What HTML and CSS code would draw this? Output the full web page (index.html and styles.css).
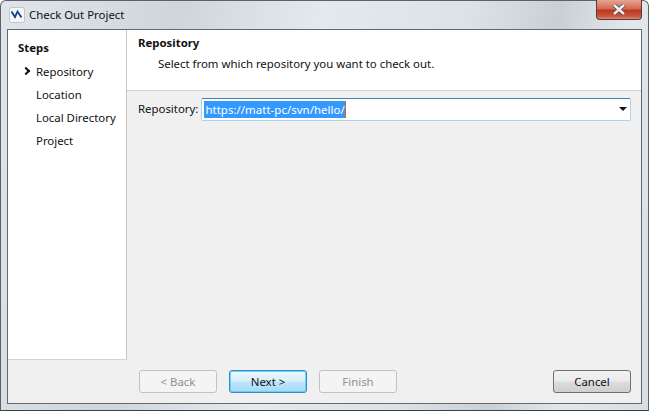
FILE: index.html
```html
<!DOCTYPE html>
<html lang="en">
<head>
  <meta charset="UTF-8" />
  <title>Check Out Project</title>
  <link rel="stylesheet" href="styles.css">
</head>
<body>
  <div class="window">
    <div class="titlebar">
      <svg class="app-icon" width="16" height="16" viewBox="0 0 16 16">
        <rect x="0.5" y="0.5" width="15" height="15" rx="2" fill="#f4f5f6" stroke="#c2c6ca" />
        <path d="M2.5 4.5 L6 10 L8.5 4.5 L12.5 10.5" fill="none" stroke="#123f8c" stroke-width="1.8" />
      </svg>
      <span class="title">Check Out Project</span>
      <div class="close">
        <svg width="14" height="11" viewBox="0 0 14 11">
          <path d="M2 1 L12 10 M12 1 L2 10" stroke="#4a4a4a" stroke-width="4" />
          <path d="M2 1 L12 10 M12 1 L2 10" stroke="#f2f2f2" stroke-width="2.4" />
        </svg>
      </div>
    </div>

    <div class="client">
      <div class="main">
        <!-- Steps -->
        <div class="sidebar">
          <h3>Steps</h3>
          <ul>
            <li class="current">Repository</li>
            <li>Location</li>
            <li>Local Directory</li>
            <li>Project</li>
          </ul>
        </div>

        <div class="content">
          <div class="header">
            <h3>Repository</h3>
            <p>Select from which repository you want to check out.</p>
          </div>
          <div class="form-row">
            <label>Repository:</label>
            <div class="combo">
              <span class="selected">https://matt-pc/svn/hello/</span>
              <span class="arrow"></span>
            </div>
          </div>
        </div>
      </div>

      <div class="footer">
        <button class="btn" disabled>&lt; Back</button>
        <button class="btn primary">Next &gt;</button>
        <button class="btn" disabled>Finish</button>
        <button class="btn cancel">Cancel</button>
      </div>
    </div>
  </div>
</body>
</html>
```

FILE: styles.css
```css
html, body {
  margin: 0;
  height: 100%;
}
body {
  font-family: 'Noto Sans', 'Open Sans', sans-serif;
  font-size: 11.4px;
  color: #111111;
  background: #ffffff;
}
.window {
  box-sizing: border-box;
  width: 649px;
  height: 411px;
  padding: 0 6px 6px 6px;
  display: flex;
  flex-direction: column;
  border: 1px solid #5c6268;
  border-bottom-color: #3c4044;
  border-radius: 6px 6px 0 0;
  background: linear-gradient(100deg, #dfe5ea 0%, #cfd6db 25%, #e4e9ed 45%, #dde2e6 65%, #c9d0d5 78%, #e2e7ea 88%, #d8dee2 100%);
}
.titlebar {
  height: 28px;
  flex: none;
  display: flex;
  align-items: flex-start;
}
.app-icon {
  margin: 6px 4px 0 2px;
}
.title {
  margin-top: 5px;
  line-height: 18px;
  color: #101010;
}
.close {
  margin-left: auto;
  margin-top: -1px;
  box-sizing: border-box;
  width: 46px;
  height: 20px;
  border: 1px solid #5a3a36;
  border-top: none;
  border-radius: 0 0 4px 4px;
  background: linear-gradient(#e5a595 0%, #d56a50 45%, #bb3a1e 55%, #c8563c 85%, #d88a78 100%);
  display: flex;
  align-items: center;
  justify-content: center;
}
.client {
  flex: 1;
  min-height: 0;
  display: flex;
  flex-direction: column;
  background: #f0f0f0;
  border: 1px solid #62686d;
}
.main {
  flex: 1;
  min-height: 0;
  display: flex;
}
.sidebar {
  box-sizing: border-box;
  width: 119px;
  flex: none;
  background: #ffffff;
  border-right: 1px solid #c8c8c8;
  border-bottom: 1px solid #d4d4d4;
  padding: 9px 0 0 10px;
}
.sidebar h3,
.header h3 {
  margin: 0;
  font-size: 11.4px;
  font-weight: bold;
  line-height: 17px;
}
.sidebar ul {
  list-style: none;
  margin: 7px 0 0;
  padding: 0 0 0 18px;
}
.sidebar li {
  height: 23px;
  line-height: 17px;
  position: relative;
}
.sidebar li.current::before {
  content: "";
  position: absolute;
  left: -13px;
  top: 5px;
  width: 4px;
  height: 4px;
  border-top: 2px solid #111111;
  border-right: 2px solid #111111;
  transform: rotate(45deg);
}
.content {
  flex: 1;
  min-width: 0;
}
.header {
  box-sizing: border-box;
  height: 61px;
  background: #ffffff;
  border-bottom: 1px solid #cfcfcf;
  padding: 4px 0 0 11px;
}
.header p {
  margin: 4px 0 0 20px;
  line-height: 17px;
}
.form-row {
  display: flex;
  align-items: center;
  padding: 7px 10px 0 11px;
}
.form-row label {
  margin-right: 3px;
  padding-bottom: 2px;
}
.combo {
  box-sizing: border-box;
  flex: 1;
  height: 23px;
  display: flex;
  align-items: center;
  justify-content: space-between;
  padding: 0 3px 1px 2px;
  background: #ffffff;
  border: 1px solid #a9d3ea;
  border-top-color: #3d85b8;
  border-radius: 2px;
}
.selected {
  background: #3399ff;
  color: #ffffff;
  line-height: 17px;
  padding-left: 1px;
  letter-spacing: 0.06px;
  border-right: 1px solid #c46a1a;
}
.arrow {
  width: 0;
  height: 0;
  border-left: 4px solid transparent;
  border-right: 4px solid transparent;
  border-top: 4px solid #111111;
}
.footer {
  flex: none;
  height: 43px;
  box-sizing: border-box;
  display: flex;
  align-items: flex-start;
  padding: 10px 10px 0 131px;
}
.btn {
  box-sizing: border-box;
  width: 78px;
  height: 23px;
  margin: 0 12px 0 0;
  padding: 0 0 1px;
  font-family: inherit;
  font-size: 11.4px;
  color: #111111;
  border: 1px solid #707070;
  border-radius: 3px;
  background: linear-gradient(#f2f2f2 0%, #ebebeb 48%, #dddddd 52%, #cfcfcf 100%);
}
.btn:disabled {
  color: #8f8f8f;
  background: #f4f4f4;
  border-color: #c2c2c2;
}
.btn.primary {
  border-color: #2f8fc4;
  box-shadow: inset 0 0 0 1px #6fd0f4;
  background: linear-gradient(#eaf6fd 0%, #d9f0fc 48%, #bee6fd 52%, #a7d9f5 100%);
}
.btn.cancel {
  margin: 0 0 0 auto;
}
```
